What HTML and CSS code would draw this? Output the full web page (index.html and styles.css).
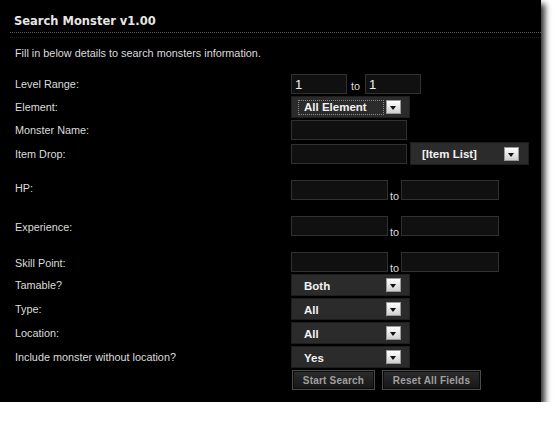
FILE: index.html
```html
<!DOCTYPE html>
<html>
<head>
<meta charset="utf-8">
<link rel="stylesheet" href="styles.css">
</head>
<body>
<div class="panel">
  <div class="title">Search Monster v1.00</div>
  <div class="rule2"></div>
  <p class="intro">Fill in below details to search monsters information.</p>
  <div class="form">
    <div class="row r1">
      <span class="label">Level Range:</span>
      <div class="ctl">
        <input class="inp w56" type="text" value="1">
        <span class="to to-sp">to</span>
        <input class="inp w56" type="text" value="1">
      </div>
    </div>
    <div class="row r2">
      <span class="label">Element:</span>
      <div class="ctl">
        <div class="sel"><span class="sel-text focus">All Element</span><span class="arrow"></span></div>
      </div>
    </div>
    <div class="row r3">
      <span class="label">Monster Name:</span>
      <div class="ctl"><input class="inp w116" type="text" value=""></div>
    </div>
    <div class="row r4">
      <span class="label">Item Drop:</span>
      <div class="ctl">
        <input class="inp w116" type="text" value="">
        <div class="sel sel-item"><span class="sel-text">[Item List]</span><span class="arrow"></span></div>
      </div>
    </div>
    <div class="row r5 range">
      <span class="label lab-up">HP:</span>
      <div class="ctl">
        <input class="inp w97" type="text" value="">
        <span class="to to-tight">to</span>
        <input class="inp w98" type="text" value="">
      </div>
    </div>
    <div class="row r6 range">
      <span class="label lab-down">Experience:</span>
      <div class="ctl">
        <input class="inp w97" type="text" value="">
        <span class="to to-tight">to</span>
        <input class="inp w98" type="text" value="">
      </div>
    </div>
    <div class="row r7 range">
      <span class="label lab-down">Skill Point:</span>
      <div class="ctl">
        <input class="inp w97" type="text" value="">
        <span class="to to-tight">to</span>
        <input class="inp w98" type="text" value="">
      </div>
    </div>
    <div class="row r8">
      <span class="label">Tamable?</span>
      <div class="ctl"><div class="sel"><span class="sel-text">Both</span><span class="arrow"></span></div></div>
    </div>
    <div class="row r8">
      <span class="label">Type:</span>
      <div class="ctl"><div class="sel"><span class="sel-text">All</span><span class="arrow"></span></div></div>
    </div>
    <div class="row r8">
      <span class="label">Location:</span>
      <div class="ctl"><div class="sel"><span class="sel-text">All</span><span class="arrow"></span></div></div>
    </div>
    <div class="row r8">
      <span class="label">Include monster without location?</span>
      <div class="ctl"><div class="sel"><span class="sel-text">Yes</span><span class="arrow"></span></div></div>
    </div>
    <div class="row r12">
      <span class="label"></span>
      <div class="ctl btns">
        <button class="btn b-start" type="button">Start Search</button>
        <button class="btn b-reset" type="button">Reset All Fields</button>
      </div>
    </div>
  </div>
</div>
</body>
</html>
```
FILE: styles.css
```css
html, body {
  margin: 0;
  padding: 0;
  background: #ffffff;
}

.panel {
  width: 541px;
  height: 402px;
  background: #000000;
  box-shadow: 4px 4px 6px rgba(0, 0, 0, 0.8);
  font-family: "Liberation Sans", Arial, sans-serif;
  font-size: 10.85px;
  color: #dcdcdc;
  overflow: hidden;
}

.title {
  margin-left: 10px;
  padding: 14px 0 0 4px;
  height: 18px;
  line-height: 14px;
  font-family: "DejaVu Sans", Verdana, sans-serif;
  font-weight: bold;
  font-size: 11.5px;
  color: #e6e6e6;
  border-bottom: 1px dotted #555555;
}

.rule2 {
  margin: 4px 0 0 10px;
  border-top: 1px dotted #262626;
}

.intro {
  margin: 8px 0 0 15px;
  line-height: 14px;
  height: 14px;
}

.form {
  margin-top: 14px;
  padding-left: 15px;
}

.row {
  display: flex;
  align-items: center;
}

.label {
  width: 276px;
  flex: none;
  line-height: 14px;
}

.lab-up {
  padding-bottom: 5px;
}

.lab-down {
  padding-top: 2px;
}

.ctl {
  display: flex;
  align-items: center;
}

.r1 { height: 20px; margin-bottom: 2px; }
.r2 { height: 22px; margin-bottom: 2px; }
.r3 { height: 20px; margin-bottom: 2px; }
.r4 { height: 23px; margin-bottom: 15px; }
.r5 { height: 20px; margin-bottom: 16px; }
.r6 { height: 20px; margin-bottom: 16px; }
.r7 { height: 20px; margin-bottom: 2px; }
.r8 { height: 22px; margin-bottom: 2px; }
.r12 { height: 20px; margin-top: 1px; }

.range .ctl,
.r1 .ctl {
  align-items: flex-end;
  height: 20px;
}

.inp {
  box-sizing: border-box;
  height: 20px;
  margin: 0;
  padding: 0 0 0 3px;
  background: #101010;
  border: 1px solid #303030;
  color: #f2f2f2;
  font-family: "Liberation Sans", Arial, sans-serif;
  font-size: 13px;
  outline: none;
}

.w56 { width: 56px; }
.w116 { width: 116px; }
.w97 { width: 97px; }
.w98 { width: 98px; }

.to {
  line-height: 14px;
  color: #dcdcdc;
}

.to-sp {
  margin: 0 5px 0 4px;
  position: relative;
  top: -1px;
}

.to-tight {
  margin: 0 2px 0 2px;
  position: relative;
  top: 3px;
}

.sel {
  box-sizing: border-box;
  width: 119px;
  height: 22px;
  background: #2b2b2b;
  border: 1px solid #1e1e1e;
  display: flex;
  align-items: center;
  padding: 0 8px 0 6px;
  position: relative;
}

.sel-item {
  margin-left: 3px;
  height: 23px;
  padding-left: 5px;
  padding-right: 9px;
}

.sel-text {
  flex: 1;
  box-sizing: border-box;
  height: 15px;
  line-height: 15px;
  padding-left: 5px;
  font-weight: bold;
  font-size: 11.5px;
  color: #f2f2f2;
  border: 1px solid transparent;
}

.sel-text.focus {
  border: 1px dotted #8a8a8a;
  line-height: 13px;
  margin-right: 2px;
}

.arrow {
  flex: none;
  width: 15px;
  height: 14px;
  box-sizing: border-box;
  border: 1px solid #9a9a9a;
  background: linear-gradient(#ffffff, #cfcfcf);
  position: relative;
}

.arrow::after {
  content: "";
  position: absolute;
  left: 3px;
  top: 5px;
  border-left: 3.5px solid transparent;
  border-right: 3.5px solid transparent;
  border-top: 4px solid #111111;
}

.btns {
  gap: 7px;
  padding-left: 1px;
}

.btn {
  box-sizing: border-box;
  height: 20px;
  margin: 0;
  padding: 0;
  background: linear-gradient(#2c2c2c, #161616);
  border: 1px solid #4a4a4a;
  box-shadow: inset 0 0 0 1px #0c0c0c;
  color: #a0a0a0;
  font-family: "Liberation Sans", Arial, sans-serif;
  font-weight: bold;
  font-size: 10px;
  letter-spacing: 0.2px;
}

.b-start { width: 83px; }
.b-reset { width: 99px; }
```
